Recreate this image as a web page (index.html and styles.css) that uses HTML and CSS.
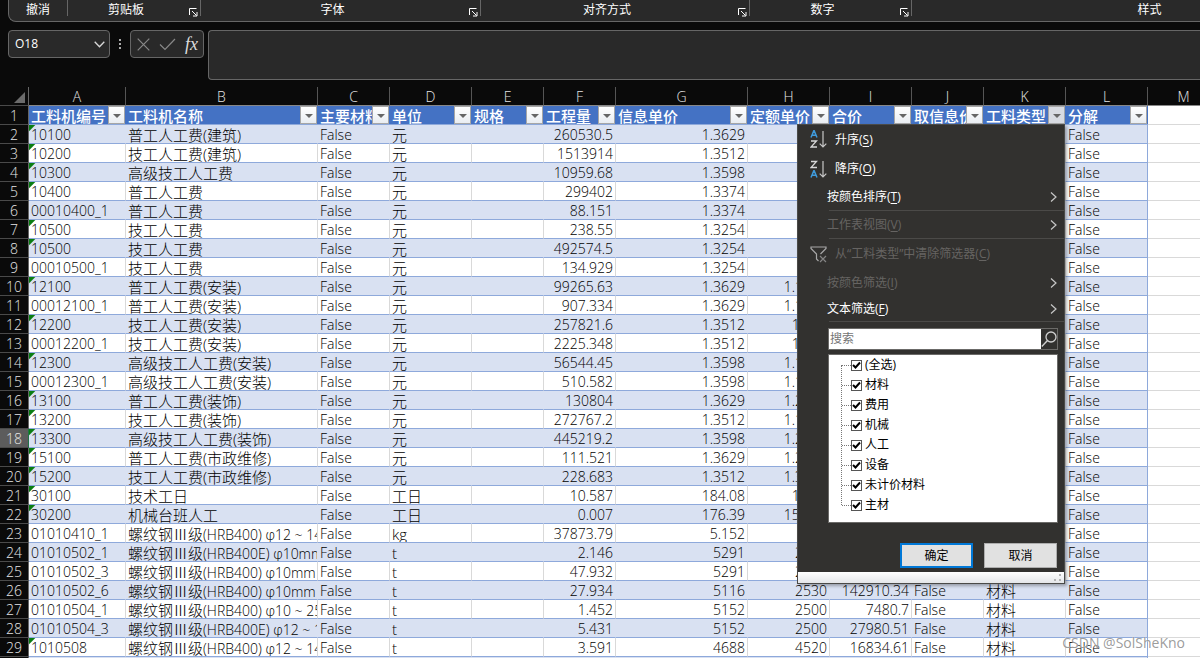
FILE: index.html
```html
<!DOCTYPE html>
<html lang="zh-CN">
<head>
<meta charset="utf-8">
<title>工料机</title>
<link rel="stylesheet" href="styles.css">
</head>
<body>
<svg class="defs" aria-hidden="true">
  <symbol id="launch" viewBox="0 0 9 9"><path d="M.5 7V.5H7.500M3 3l4.500 4.500M8 4v4H4" fill="none" stroke="currentColor"/></symbol>
  <symbol id="tri" viewBox="0 0 8 4"><path d="M0 0h8L4 4z" fill="currentColor"/></symbol>
  <symbol id="more" viewBox="0 0 7 10"><path d="M1 .5L6 5 1 9.500" fill="none" stroke="currentColor" stroke-width="1.200"/></symbol>
</svg>
<div class="app">
  <div class="ribbon">
    <div class="group g-undo"><span>撤消</span></div>
    <div class="group g-clip"><span>剪贴板</span><button aria-label="剪贴板设置"><svg><use href="#launch"/></svg></button></div>
    <div class="group g-font"><span>字体</span><button aria-label="字体设置"><svg><use href="#launch"/></svg></button></div>
    <div class="group g-align"><span>对齐方式</span><button aria-label="对齐设置"><svg><use href="#launch"/></svg></button></div>
    <div class="group g-num"><span>数字</span><button aria-label="数字设置"><svg><use href="#launch"/></svg></button></div>
    <div class="group g-style"><span>样式</span></div>
  </div>
  <div class="formula-row">
    <div class="name-box"><input aria-label="名称框" value="O18"><button aria-label="展开名称"><svg width="11" height="7" viewBox="0 0 11 7"><path d="M.7.800l4.800 5 4.800-5" fill="none" stroke="currentColor" stroke-width="1.300"/></svg></button></div>
    <div class="dots"><i></i><i></i><i></i></div>
    <div class="fx-box">
      <button aria-label="取消输入"><svg width="13" height="13" viewBox="0 0 13 13"><path d="M.7.700l11.600 11.600M12.300.7L.7 12.300" fill="none" stroke="currentColor" stroke-width="1.200"/></svg></button>
      <button aria-label="输入"><svg width="17" height="13" viewBox="0 0 17 13"><path d="M1 6.500l5 5L16 1" fill="none" stroke="currentColor" stroke-width="1.200"/></svg></button>
      <button class="fx" aria-label="插入函数">fx</button>
    </div>
    <textarea class="formula" aria-label="编辑栏"></textarea>
  </div>
  <div class="sheet">
    <table>
      <colgroup><col class="w29"><col class="w97"><col class="w192"><col class="w72"><col class="w82"><col class="w72"><col class="w72"><col class="w132"><col class="w82"><col class="w82"><col class="w72"><col class="w82"><col class="w82"><col class="w72"></colgroup>
      <thead>
        <tr class="letters"><th class="corner"><svg width="11" height="11" viewBox="0 0 11 11"><path d="M11 0v11H0z" fill="#6b6b6b"/></svg></th><th>A</th><th>B</th><th>C</th><th>D</th><th>E</th><th>F</th><th>G</th><th>H</th><th>I</th><th>J</th><th>K</th><th>L</th><th>M</th></tr>
        <tr class="fields"><th>1</th>
          <th>工料机编号<button aria-label="筛选"><svg><use href="#tri"/></svg></button></th>
          <th>工料机名称<button aria-label="筛选"><svg><use href="#tri"/></svg></button></th>
          <th>主要材料<button aria-label="筛选"><svg><use href="#tri"/></svg></button></th>
          <th>单位<button aria-label="筛选"><svg><use href="#tri"/></svg></button></th>
          <th>规格<button aria-label="筛选"><svg><use href="#tri"/></svg></button></th>
          <th>工程量<button aria-label="筛选"><svg><use href="#tri"/></svg></button></th>
          <th>信息单价<button aria-label="筛选"><svg><use href="#tri"/></svg></button></th>
          <th>定额单价<button aria-label="筛选"><svg><use href="#tri"/></svg></button></th>
          <th>合价<button aria-label="筛选"><svg><use href="#tri"/></svg></button></th>
          <th>取信息价<button aria-label="筛选"><svg><use href="#tri"/></svg></button></th>
          <th class="open">工料类型<button aria-label="筛选"><svg><use href="#tri"/></svg></button>
            <div class="menu">
              <button class="item tall first"><svg width="17" height="19" viewBox="0 0 17 19"><path d="M1 7.500L3.800.8h.4L7 7.500M2 5.300h4" fill="none" stroke="#3f9bdc" stroke-width="1.500"/><path d="M1 11h5.500L1 17h6" fill="none" stroke="#d8d8d8" stroke-width="1.300"/><path d="M13 1v16M9.700 13.700L13 17l3.300-3.300" fill="none" stroke="#c8c8c8" stroke-width="1.200"/></svg><span>升序(<u>S</u>)</span></button>
              <button class="item tall"><svg width="17" height="19" viewBox="0 0 17 19"><path d="M1 1.500h5.500L1 7.500h6" fill="none" stroke="#d8d8d8" stroke-width="1.300"/><path d="M1 17.500l2.800-6.700h.4L7 17.500M2 15.300h4" fill="none" stroke="#3f9bdc" stroke-width="1.500"/><path d="M13 1v16M9.700 13.700L13 17l3.300-3.300" fill="none" stroke="#c8c8c8" stroke-width="1.200"/></svg><span>降序(<u>O</u>)</span></button>
              <button class="item"><span>按颜色排序(<u>T</u>)</span><svg class="more"><use href="#more"/></svg></button>
              <hr>
              <button class="item mid off"><span>工作表视图(<u>V</u>)</span><svg class="more"><use href="#more"/></svg></button>
              <hr>
              <button class="item tall off"><svg width="17" height="17" viewBox="0 0 17 17"><path d="M8.500 15l-2-2V8L1 2.500V1h15v1.500L10.500 8" fill="none" stroke="#a8a8a8" stroke-width="1.200"/><path d="M10 10l6 6M16 10l-6 6" stroke="#858585" stroke-width="1.200"/></svg><span>从“工料类型”中清除筛选器(<u>C</u>)</span></button>
              <button class="item mid off"><span>按颜色筛选(<u>I</u>)</span><svg class="more"><use href="#more"/></svg></button>
              <button class="item low"><span>文本筛选(<u>F</u>)</span><svg class="more"><use href="#more"/></svg></button>
              <hr>
              <div class="search"><input type="text" placeholder="搜索" aria-label="搜索"><button aria-label="搜索"><svg width="16" height="18" viewBox="0 0 16 18"><circle cx="10" cy="7" r="5" fill="none" stroke="#d0d0d0" stroke-width="1.300"/><path d="M6.500 10.500L.8 16.500" stroke="#d0d0d0" stroke-width="1.400"/></svg></button></div>
              <div class="values">
                <label><input type="checkbox" checked>(全选)</label>
                <label><input type="checkbox" checked>材料</label>
                <label><input type="checkbox" checked>费用</label>
                <label><input type="checkbox" checked>机械</label>
                <label><input type="checkbox" checked>人工</label>
                <label><input type="checkbox" checked>设备</label>
                <label><input type="checkbox" checked>未计价材料</label>
                <label><input type="checkbox" checked>主材</label>
              </div>
              <div class="actions"><button class="ok">确定</button><button>取消</button></div>
              <div class="grip"><svg width="8" height="8" viewBox="0 0 8 8"><path d="M5 0h2v2H5zM5 5h2v2H5zM0 5h2v2H0z" fill="#b4b4b4"/></svg></div>
            </div>
          </th>
          <th>分解<button aria-label="筛选"><svg><use href="#tri"/></svg></button></th><td></td></tr>
      </thead>
      <tbody>
        <tr><th>2</th><td class="t">10100</td><td>普工人工费(建筑)</td><td>False</td><td>元</td><td></td><td>260530.5</td><td>1.3629</td><td></td><td></td><td></td><td></td><td>False</td><td></td></tr>
        <tr><th>3</th><td class="t">10200</td><td>技工人工费(建筑)</td><td>False</td><td>元</td><td></td><td>1513914</td><td>1.3512</td><td></td><td></td><td></td><td></td><td>False</td><td></td></tr>
        <tr><th>4</th><td class="t">10300</td><td>高级技工人工费</td><td>False</td><td>元</td><td></td><td>10959.68</td><td>1.3598</td><td></td><td></td><td></td><td></td><td>False</td><td></td></tr>
        <tr><th>5</th><td class="t">10400</td><td>普工人工费</td><td>False</td><td>元</td><td></td><td>299402</td><td>1.3374</td><td></td><td></td><td></td><td></td><td>False</td><td></td></tr>
        <tr><th>6</th><td>00010400_1</td><td>普工人工费</td><td>False</td><td>元</td><td></td><td>88.151</td><td>1.3374</td><td></td><td></td><td></td><td></td><td>False</td><td></td></tr>
        <tr><th>7</th><td class="t">10500</td><td>技工人工费</td><td>False</td><td>元</td><td></td><td>238.55</td><td>1.3254</td><td></td><td></td><td></td><td></td><td>False</td><td></td></tr>
        <tr><th>8</th><td class="t">10500</td><td>技工人工费</td><td>False</td><td>元</td><td></td><td>492574.5</td><td>1.3254</td><td></td><td></td><td></td><td></td><td>False</td><td></td></tr>
        <tr><th>9</th><td>00010500_1</td><td>技工人工费</td><td>False</td><td>元</td><td></td><td>134.929</td><td>1.3254</td><td></td><td></td><td></td><td></td><td>False</td><td></td></tr>
        <tr><th>10</th><td class="t">12100</td><td>普工人工费(安装)</td><td>False</td><td>元</td><td></td><td>99265.63</td><td>1.3629</td><td>1.1629</td><td></td><td></td><td></td><td>False</td><td></td></tr>
        <tr><th>11</th><td>00012100_1</td><td>普工人工费(安装)</td><td>False</td><td>元</td><td></td><td>907.334</td><td>1.3629</td><td>1.1629</td><td></td><td></td><td></td><td>False</td><td></td></tr>
        <tr><th>12</th><td class="t">12200</td><td>技工人工费(安装)</td><td>False</td><td>元</td><td></td><td>257821.6</td><td>1.3512</td><td>1.151</td><td></td><td></td><td></td><td>False</td><td></td></tr>
        <tr><th>13</th><td>00012200_1</td><td>技工人工费(安装)</td><td>False</td><td>元</td><td></td><td>2225.348</td><td>1.3512</td><td>1.151</td><td></td><td></td><td></td><td>False</td><td></td></tr>
        <tr><th>14</th><td class="t">12300</td><td>高级技工人工费(安装)</td><td>False</td><td>元</td><td></td><td>56544.45</td><td>1.3598</td><td>1.1598</td><td></td><td></td><td></td><td>False</td><td></td></tr>
        <tr><th>15</th><td>00012300_1</td><td>高级技工人工费(安装)</td><td>False</td><td>元</td><td></td><td>510.582</td><td>1.3598</td><td>1.1598</td><td></td><td></td><td></td><td>False</td><td></td></tr>
        <tr><th>16</th><td class="t">13100</td><td>普工人工费(装饰)</td><td>False</td><td>元</td><td></td><td>130804</td><td>1.3629</td><td>1.2629</td><td></td><td></td><td></td><td>False</td><td></td></tr>
        <tr><th>17</th><td class="t">13200</td><td>技工人工费(装饰)</td><td>False</td><td>元</td><td></td><td>272767.2</td><td>1.3512</td><td>1.1512</td><td></td><td></td><td></td><td>False</td><td></td></tr>
        <tr class="current"><th>18</th><td class="t">13300</td><td>高级技工人工费(装饰)</td><td>False</td><td>元</td><td></td><td>445219.2</td><td>1.3598</td><td>1.2598</td><td></td><td></td><td></td><td>False</td><td></td></tr>
        <tr><th>19</th><td class="t">15100</td><td>普工人工费(市政维修)</td><td>False</td><td>元</td><td></td><td>111.521</td><td>1.3629</td><td>1.2629</td><td></td><td></td><td></td><td>False</td><td></td></tr>
        <tr><th>20</th><td class="t">15200</td><td>技工人工费(市政维修)</td><td>False</td><td>元</td><td></td><td>228.683</td><td>1.3512</td><td>1.3512</td><td></td><td></td><td></td><td>False</td><td></td></tr>
        <tr><th>21</th><td class="t">30100</td><td>技术工日</td><td>False</td><td>工日</td><td></td><td>10.587</td><td>184.08</td><td>184.1</td><td></td><td></td><td></td><td>False</td><td></td></tr>
        <tr><th>22</th><td class="t">30200</td><td>机械台班人工</td><td>False</td><td>工日</td><td></td><td>0.007</td><td>176.39</td><td>156.39</td><td></td><td></td><td></td><td>False</td><td></td></tr>
        <tr><th>23</th><td>01010410_1</td><td>螺纹钢Ⅲ级<span>(HRB400) φ12 ~ 14mm</span></td><td>False</td><td>kg</td><td></td><td>37873.79</td><td>5.152</td><td>4.52</td><td></td><td></td><td></td><td>False</td><td></td></tr>
        <tr><th>24</th><td>01010502_1</td><td>螺纹钢Ⅲ级<span>(HRB400E) φ10mm</span></td><td>False</td><td>t</td><td></td><td>2.146</td><td>5291</td><td>2530</td><td></td><td></td><td></td><td>False</td><td></td></tr>
        <tr><th>25</th><td>01010502_3</td><td>螺纹钢Ⅲ级<span>(HRB400) φ10mm</span></td><td>False</td><td>t</td><td></td><td>47.932</td><td>5291</td><td>2530</td><td></td><td></td><td></td><td>False</td><td></td></tr>
        <tr><th>26</th><td>01010502_6</td><td>螺纹钢Ⅲ级<span>(HRB400) φ10mm</span></td><td>False</td><td>t</td><td></td><td>27.934</td><td>5116</td><td>2530</td><td>142910.34</td><td>False</td><td>材料</td><td>False</td><td></td></tr>
        <tr><th>27</th><td>01010504_1</td><td>螺纹钢Ⅲ级<span>(HRB400) φ10 ~ 25mm</span></td><td>False</td><td>t</td><td></td><td>1.452</td><td>5152</td><td>2500</td><td>7480.7</td><td>False</td><td>材料</td><td>False</td><td></td></tr>
        <tr><th>28</th><td>01010504_3</td><td>螺纹钢Ⅲ级<span>(HRB400E) φ12 ~ 14mm</span></td><td>False</td><td>t</td><td></td><td>5.431</td><td>5152</td><td>2500</td><td>27980.51</td><td>False</td><td>材料</td><td>False</td><td></td></tr>
        <tr><th>29</th><td class="t">1010508</td><td>螺纹钢Ⅲ级<span>(HRB400) φ12 ~ 14mm</span></td><td>False</td><td>t</td><td></td><td>3.591</td><td>4688</td><td>4520</td><td>16834.61</td><td>False</td><td>材料</td><td>False</td><td></td></tr>
        <tr><th></th><td></td><td></td><td></td><td></td><td></td><td></td><td></td><td></td><td></td><td></td><td></td><td></td><td></td></tr>
      </tbody>
    </table>
  </div>
  <div class="watermark">CSDN @SolSheKno</div>
</div>
</body>
</html>
```
FILE: styles.css
```css
* { box-sizing: border-box; }
body { margin: 0; background: #0a0a0a; color: #fff; font: 12px/18px "Open Sans", "Noto Sans CJK SC", sans-serif; }
button, input, textarea { font: inherit; color: inherit; margin: 0; padding: 0; border: 0; background: none; border-radius: 0; }
.defs { position: absolute; width: 0; height: 0; }
.app { display: flex; flex-direction: column; height: 100vh; overflow: hidden; position: relative; }

.ribbon { display: flex; flex: none; height: 22px; margin-left: 8px; background: #292929; border: 1px solid #666; border-width: 0 0 1px 1px; border-bottom-left-radius: 8px; overflow: hidden; }
.group { flex: none; display: flex; height: 16px; border-right: 1px solid #666; padding-right: 2px; }
.group span { flex: 1; text-align: center; line-height: 20px; }
.group button { width: 9px; height: 9px; margin: 8px 0 0 5px; }
.group svg { display: block; width: 9px; height: 9px; }
.g-undo { width: 59px; padding-right: 0; }
.g-clip { width: 133px; }
.g-font { width: 280px; }
.g-align { width: 269px; }
.g-num { width: 162px; }
.g-style { width: 476px; padding-right: 0; }

.formula-row { display: flex; flex: none; align-items: flex-start; margin: 8px 0 7px 8px; }
.name-box, .fx-box, .formula { background: #292929; border: 1px solid #666; border-radius: 4px; }
.name-box { display: flex; align-items: center; width: 102px; height: 28px; padding: 0 4px 0 6px; }
.name-box input { flex: 1; min-width: 0; }
.name-box button { width: 11px; line-height: 0; color: #d8d8d8; }
.dots { display: flex; flex-direction: column; gap: 2px; width: 20px; align-items: center; padding-top: 9px; }
.dots i { width: 2px; height: 2px; background: #aaa; }
.fx-box { display: flex; align-items: center; justify-content: space-between; width: 74px; height: 28px; padding: 0 5px 0 6px; color: #888; }
.fx-box button { line-height: 0; }
.fx-box .fx { color: #ddd; font: italic 18px/22px "Liberation Serif", serif; }
.formula { flex: 1; height: 50px; margin-left: 4px; border-right: 0; border-radius: 4px 0 0 4px; resize: none; display: block; }

.sheet { flex: 1; min-height: 0; overflow: hidden; }
table { table-layout: fixed; width: 1220px; border-collapse: separate; border-spacing: 0; font-size: 14px; color: #000; }
.w29 { width: 29px; } .w72 { width: 72px; } .w82 { width: 82px; } .w97 { width: 97px; } .w132 { width: 132px; } .w192 { width: 192px; }
th, td { height: 19px; padding: 2px 2px 0; line-height: 16px; font-weight: 300; white-space: nowrap; overflow: hidden; text-align: left; }
tr > th:first-child { background: #0a0a0a; color: #e6e6e6; text-align: center; padding: 2px 0 0; border-bottom: 1px solid #4a4a4a; border-right: 1px solid #666; }
.letters th { color: #e6e6e6; text-align: center; border-right: 1px solid #555; border-bottom: 1px solid #888; }
.letters .corner { text-align: right; padding-right: 3px; }
.corner svg { display: block; margin-left: auto; }

.fields th:not(:first-child) { position: relative; background: #4472c4; color: #fff; font-size: 15px; font-weight: 500; border-bottom: 1px solid #8ea9db; }
.fields > th > button { position: absolute; right: 1px; top: 0; width: 17px; height: 18px; border: 1px solid #a6a6a6; background: linear-gradient(#fff, #e9edf2); color: #666; }
.fields > th > button svg { display: block; width: 8px; height: 4px; margin: 1px auto 0; }
.fields .open { overflow: visible; z-index: 2; }
.fields .open > button { background: #d8dbe2; }

td { background: #fff; border-right: 1px solid #d9d9d9; border-bottom: 1px solid #8ea9db; }
tbody tr:nth-child(odd) td { background: #d9e1f2; border-right-color: #d9e1f2; }
tbody tr td:nth-child(13) { border-right-color: #8ea9db !important; }
tr td:last-child, tbody tr:nth-child(odd) td:last-child { background: #fff; border-color: #d9d9d9; }
td:nth-child(3), td:nth-child(5), td:nth-child(12) { font-size: 15px; }
td span { font-size: 14px; line-height: 12px; }
td:nth-child(n+7):nth-child(-n+10) { text-align: right; }
.t { background-image: linear-gradient(135deg, #0a7d12 4px, transparent 5px) !important; }
.current > th:first-child { background: #5c5c5c; border-right-color: #217346; }

.menu { position: absolute; right: 1px; top: 18px; width: 268px; border: 1px solid #4a4a48; background: #32312f; color: #fff; font-size: 12px; font-weight: 400; line-height: 18px; box-shadow: 2px 2px 3px rgba(0, 0, 0, .3); }
.item { display: flex; align-items: center; width: 100%; height: 26px; padding: 0 7px 0 29px; text-align: left; }
.item.tall { height: 30px; padding-left: 12px; gap: 8px; }
.item.first { height: 29px; }
.item.mid { height: 27px; }
.item.low { height: 25px; }
.item span { flex: 1; }
.item u { text-underline-offset: 2px; }
.item.off { color: #666462; }
.item .more { width: 7px; height: 10px; color: #c8c8c8; }
.menu hr { margin: 0 0 0 31px; border: 0; height: 1px; background: #4b4a48; }
.search { display: flex; height: 22px; margin: 6px 6px 0 30px; border: 1px solid #6b6a68; background: #32312f; }
.search input { flex: 1; min-width: 0; background: #fff; color: #000; padding-left: 1px; }
.search input::placeholder { color: #757575; opacity: 1; }
.search button { width: 16px; line-height: 0; }
.values { position: relative; height: 169px; margin: 4px 6px 0 30px; padding-left: 13px; border: 1px solid #6b6a68; background: #fff; color: #000; }
.values::before { content: ""; position: absolute; left: 12px; top: 10px; height: 140px; border-left: 1px dotted #777; }
.values label { display: flex; align-items: center; height: 20px; gap: 3px; }
.values label::before { content: ""; width: 9px; margin-right: -3px; border-top: 1px dotted #777; }
.values input { appearance: none; width: 11px; height: 11px; border: 1px solid #555; background: #fff url("data:image/svg+xml,%3Csvg xmlns='http://www.w3.org/2000/svg' viewBox='0 0 9 9'%3E%3Cpath d='M1 4l2.500 2.500L8 1.500' fill='none' stroke='%23000' stroke-width='2'/%3E%3C/svg%3E") center/9px no-repeat; }
.actions { display: flex; justify-content: flex-end; gap: 11px; margin: 20px 7px 4px 0; }
.actions button { width: 73px; height: 25px; background: #e1e1e1; border: 1px solid #adadad; color: #000; }
.actions .ok { border: 2px solid #0078d7; }
.grip { display: flex; justify-content: flex-end; align-items: center; height: 11px; padding-right: 2px; background: linear-gradient(#fff, #e4e6e9); }

.watermark { position: absolute; right: 15px; bottom: 5px; font-size: 14px; line-height: 20px; color: rgba(130, 130, 130, .8); text-shadow: 0 0 1px #fff; }
```
